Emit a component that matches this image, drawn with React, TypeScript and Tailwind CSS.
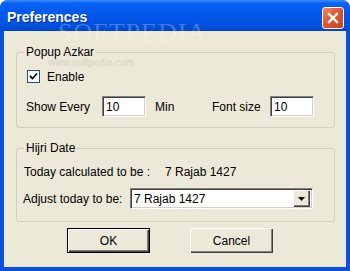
const font = { fontFamily: '"Liberation Sans", Arial, sans-serif' };

function Sunken({ className, children }: { className?: string; children?: React.ReactNode }) {
  return (
    <div
      className={
        "flex items-center bg-white border border-t-[#808080] border-l-[#808080] border-b-white border-r-white shadow-[inset_1px_1px_0_#404040,inset_-1px_-1px_0_#d4d0c8] " +
        (className ?? "")
      }
    >
      {children}
    </div>
  );
}

function Button({ label, primary }: { label: string; primary?: boolean }) {
  return (
    <button
      className={
        "w-[83px] h-[25px] text-[12px] leading-none text-black bg-[#ece9d8] " +
        (primary
          ? "border border-black shadow-[inset_1px_1px_0_#fff,inset_-1px_-1px_0_#404040,inset_-2px_-2px_0_#808080]"
          : "shadow-[inset_1px_1px_0_#fff,inset_-1px_-1px_0_#404040,inset_-2px_-2px_0_#808080]")
      }
    >
      {label}
    </button>
  );
}

export default function App() {
  return (
    <div className="w-[350px] h-[271px] overflow-hidden" style={font}>
      <div className="relative w-[350px] h-[271px] flex flex-col rounded-t-[8px] bg-[#0a50dc]">
        {/* Title bar */}
        <div className="h-[31px] flex items-center justify-between pl-[7px] pr-[6px] rounded-t-[8px] bg-[linear-gradient(to_bottom,#3d8dff_0%,#0a62f4_10%,#0058ea_45%,#0052e0_80%,#0045cc_100%)]">
          <span className="mt-[4px] text-white text-[14px] font-bold [text-shadow:1px_1px_0_#0c2b9a]">Preferences</span>
          <div className="w-[22px] h-[22px] mt-[4px] rounded-[3px] border border-white bg-[linear-gradient(135deg,#f08a6a_0%,#e2562f_45%,#c8401f_100%)] flex items-center justify-center">
            <svg width="12" height="12" viewBox="0 0 12 12">
              <path d="M2 2 L10 10 M10 2 L2 10" stroke="white" strokeWidth="2.4" strokeLinecap="square" />
            </svg>
          </div>
        </div>

        {/* Client area */}
        <div className="flex-1 mx-[4px] mb-[4px] bg-[#ece9d8] text-[12px] text-black leading-[14px]">
          <fieldset className="mt-[14px] ml-[12px] w-[319px] border border-[#d0d0bf] rounded-[3px] pl-[10px] pr-[10px] pb-[10px]">
            <legend className="-ml-[3px] px-[2px]">Popup Azkar</legend>
            <div className="flex items-center mt-[11px] h-[13px]">
              <div className="w-[13px] h-[13px] bg-white border border-[#1c5180] flex items-center justify-center">
                <svg width="9" height="9" viewBox="0 0 9 9">
                  <path d="M1 4 L3.5 6.5 L8 1.5" stroke="black" strokeWidth="1.8" fill="none" />
                </svg>
              </div>
              <span className="ml-[7px]">Enable</span>
            </div>
            <div className="flex items-center mt-[13px] h-[21px]">
              <span className="w-[76px] -ml-[1px]">Show Every</span>
              <Sunken className="w-[44px] h-[21px] pl-[3px]">10</Sunken>
              <span className="ml-[9px] w-[57px]">Min</span>
              <span className="w-[58px]">Font size</span>
              <Sunken className="w-[44px] h-[21px] pl-[3px]">10</Sunken>
            </div>
          </fieldset>

          <fieldset className="mt-[13px] ml-[12px] w-[319px] border border-[#d0d0bf] rounded-[3px] pl-[6px] pr-[10px] pb-[12px]">
            <legend className="ml-[1px] px-[2px]">Hijri Date</legend>
            <div className="flex items-center mt-[10px]">
              <span className="w-[142px] pl-[1px]">Today calculated to be :</span>
              <span>7 Rajab 1427</span>
            </div>
            <div className="flex items-center mt-[9px] h-[21px]">
              <span className="w-[107px]">Adjust today to be:</span>
              <Sunken className="w-[183px] h-[21px] pl-[3px] pr-[2px] justify-between">
                <span>7 Rajab 1427</span>
                <div className="w-[17px] h-[17px] bg-[#ece9d8] shadow-[inset_1px_1px_0_#fff,inset_-1px_-1px_0_#404040,inset_-2px_-2px_0_#808080] flex items-center justify-center">
                  <svg width="7" height="4" viewBox="0 0 7 4">
                    <path d="M0 0 H7 L3.5 4 Z" fill="black" />
                  </svg>
                </div>
              </Sunken>
            </div>
          </fieldset>

          <div className="flex mt-[6px] ml-[63px] gap-[40px]">
            <Button label="OK" primary />
            <Button label="Cancel" />
          </div>
        </div>

        {/* watermark */}
        <div className="absolute left-[58px] top-[20px] text-[26px] leading-none tracking-[1px] text-white/25 pointer-events-none" style={{ fontFamily: '"Liberation Serif", serif' }}>
          SOFTPEDIA<sup className="text-[8px]">™</sup>
        </div>
        <div className="absolute left-[48px] top-[58px] text-[10px] leading-none text-[#c8c4b4]/60 pointer-events-none">www.softpedia.com</div>
      </div>
    </div>
  );
}
